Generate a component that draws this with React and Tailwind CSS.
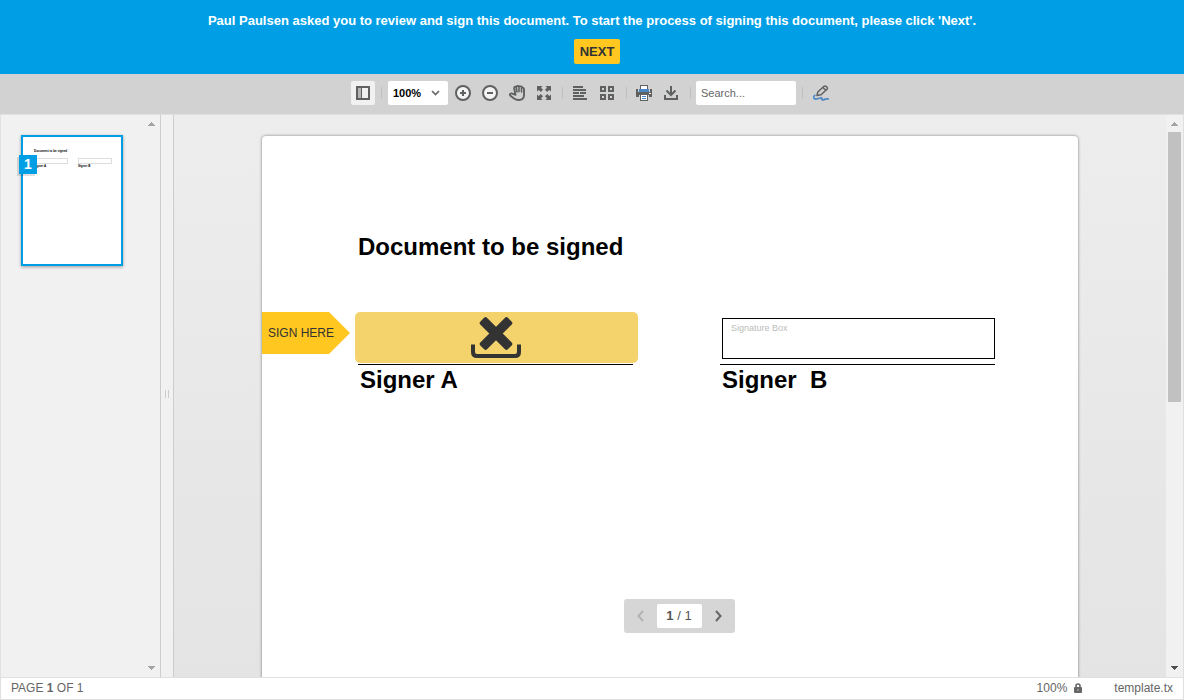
import React, { useState } from 'react';

const ToolButton = ({ label, children }) => (
    <button aria-label={label} className="flex items-center justify-center w-[26px] h-6 mr-px text-[#5f6060]">
        {children}
    </button>
);

const Separator = ({ className }) => (
    <div className={`flex justify-center ${className}`}>
        <div className="w-px h-3 bg-[#c0c0c0]"></div>
    </div>
);

const ScrollArrow = ({ down, className }) => (
    <svg className={`w-[7px] h-1 ${className}`} viewBox="0 0 7 4" fill="currentColor" shapeRendering="crispEdges">
        <path d={down ? 'M0 0h7v1H6v1H5v1H4v1H3V3H2V2H1V1H0z' : 'M0 4h7V3H6V2H5V1H4V0H3v1H2v1H1v1H0z'} />
    </svg>
);

const Banner = () => (
    <header className="flex flex-col items-center h-[74px] shrink-0 pt-[13px] gap-[10px] bg-[#009fe5]">
        <p className="text-[13px] leading-4 font-bold text-white">
            Paul Paulsen asked you to review and sign this document. To start the process of signing this document, please click 'Next'.
        </p>
        <button className="w-[46px] h-[25px] ml-[10px] rounded-[2px] bg-[#ffc720] text-[13px] font-bold text-[#333] hover:bg-[#ffd24d]">
            NEXT
        </button>
    </header>
);

const Toolbar = ({ zoom, setZoom }) => {
    const [search, setSearch] = useState('');

    return (
        <div className="flex items-center justify-center h-10 pb-[2px] shrink-0 bg-[#d2d2d2]">
            <button aria-label="Toggle sidebar" className="flex items-center justify-center w-6 h-6 rounded-[2px] bg-[#f1f1f1] text-[#5f6060]">
                <svg className="w-[14px] h-[14px]" viewBox="0 0 14 14" fill="none">
                    <path d="M1 1h4v12H1z" fill="#b5b5b5" />
                    <path d="M1 1h12v12H1z" stroke="currentColor" strokeWidth="2" />
                    <path d="M5.5 1v12" stroke="currentColor" />
                </svg>
            </button>
            <Separator className="w-[13px]" />
            <div className="relative mr-[2px]">
                <select
                    aria-label="Zoom"
                    className="block w-[60px] h-6 pl-[5px] rounded-[2px] appearance-none bg-white text-[11px] font-bold text-black focus:outline-none"
                    value={zoom} onChange={(e) => setZoom(e.target.value)}
                >
                    <option value="50">50%</option>
                    <option value="100">100%</option>
                    <option value="200">200%</option>
                </select>
                <div className="absolute inset-y-0 right-2 flex items-center pointer-events-none text-[#666]">
                    <svg className="w-[9px] h-[9px]" viewBox="0 0 9 9" fill="none" stroke="currentColor" strokeWidth="1.6">
                        <path d="M1 2l3.5 3.5L8 2" />
                    </svg>
                </div>
            </div>
            <ToolButton label="Zoom in">
                <svg className="w-4 h-4" viewBox="0 0 16 16" fill="none" stroke="currentColor">
                    <circle cx="8" cy="8" r="7" strokeWidth="2" fill="#f4f4f4" />
                    <path d="M8 5v6M5 8h6" strokeWidth="2" />
                </svg>
            </ToolButton>
            <ToolButton label="Zoom out">
                <svg className="w-4 h-4" viewBox="0 0 16 16" fill="none" stroke="currentColor">
                    <circle cx="8" cy="8" r="7" strokeWidth="2" fill="#f4f4f4" />
                    <path d="M5 8h6" strokeWidth="2" />
                </svg>
            </ToolButton>
            <ToolButton label="Pan">
                <svg className="w-4 h-4" viewBox="0 0 16 16" fill="none" stroke="currentColor" strokeLinecap="round" strokeLinejoin="round">
                    <path d="M6.500 9.800L5.200 3.500Q5 2 6.200 1.800L8 1.200q1-.4 2 0l2 .2q1 .2 1.200 1l1 .4q.8.500.8 1.500v6.200q-.3 4.300-5 4.500Q7 15 5 13.500L1.500 10.800Q.5 9.600 1.300 8.800q1-.8 2.200-.2l3 1.200" strokeWidth="1.900" />
                    <path d="M7.300 2.500l.7 4.300M10 2v4.800M12.500 3v4" strokeWidth="1.600" />
                </svg>
            </ToolButton>
            <ToolButton label="Full screen">
                <svg className="w-[14px] h-[14px]" viewBox="0 0 14 14" fill="currentColor">
                    <path d="M0 0h5.500L4 1.800l2 2L3.800 6l-2-2L0 5.500zM14 0v5.500L12.200 4l-2 2L8 3.800l2-2L8.500 0zM14 14H8.500l1.500-1.800-2-2L10.200 8l2 2L14 8.500zM0 14V8.500L1.800 10l2-2L6 10.200l-2 2L5.500 14z" />
                </svg>
            </ToolButton>
            <Separator className="w-[9px]" />
            <ToolButton label="Continuous view">
                <svg className="w-[14px] h-[14px]" viewBox="0 0 14 14" fill="currentColor" shapeRendering="crispEdges">
                    <path d="M0 0h10v2H0zM0 3h13v2H0zM0 6h6v2H0zM7 6h6v2H7zM0 9h11v2H0zM0 12h14v2H0z" />
                </svg>
            </ToolButton>
            <ToolButton label="Grid view">
                <svg className="w-[14px] h-[14px]" viewBox="0 0 14 14" fill="none" stroke="currentColor" strokeWidth="2">
                    <path d="M1 1h4v4H1zM9 1h4v4H9zM1 9h4v4H1zM9 9h4v4H9z" />
                </svg>
            </ToolButton>
            <Separator className="w-[10px]" />
            <ToolButton label="Print">
                <svg className="w-4 h-4" viewBox="0 0 16 16" fill="currentColor" shapeRendering="crispEdges">
                    <path d="M0 4h2v3h12V4h2v8h-3v-2H3v2H0z" />
                    <path d="M4 0h8v5H4z" />
                    <path d="M5 1h6v3H5z" fill="#fff" />
                    <path d="M3 4h10v3H3z" fill="#4a86c5" />
                    <path d="M4 9h8v7H4z" />
                    <path d="M5 10h6v5H5z" fill="#fff" />
                    <path d="M6 11h4v1H6zM6 13h4v1H6z" fill="#4a86c5" />
                    <path d="M13 8h2v1h-2z" fill="#fff" />
                </svg>
            </ToolButton>
            <ToolButton label="Download">
                <svg className="w-[14px] h-4" viewBox="0 0 14 16" fill="none" stroke="currentColor" strokeWidth="2">
                    <path d="M7 1v9M2.500 5.500L7 10l4.500-4.500" />
                    <path d="M1 10v4h12v-4" />
                </svg>
            </ToolButton>
            <Separator className="w-[11px]" />
            <input
                type="text"
                aria-label="Search"
                placeholder="Search..."
                className="w-[100px] h-6 px-[5px] rounded-[2px] bg-white text-[11px] text-[#333] placeholder:text-[#666] focus:outline-none"
                value={search} onChange={(e) => setSearch(e.target.value)}
            />
            <Separator className="w-3" />
            <button aria-label="Sign" className="flex items-center w-[25px] h-6 pl-[5px] text-[#5f6060]">
                <svg className="w-4 h-4" viewBox="0 0 16 16" fill="none">
                    <path d="M4 10.500L4.800 7 11 1.300q1-.8 2 0l1 1q.8 1 0 2L8 9.800z" stroke="currentColor" strokeWidth="1.500" strokeLinejoin="round" />
                    <path d="M10 2.500l3 3" stroke="currentColor" strokeWidth="1.500" />
                    <path d="M2.500 10Q.5 10.800.8 12.700q.4 1.800 3 1.300l4.200-1.200q1.200 0 .8 1-.2 1.200 1.200 1.200 1.200-.2 2.500-1 1.300-.3 3.500 0" stroke="#4a86c5" strokeWidth="1.700" />
                </svg>
            </button>
        </div>
    );
};

const Sidebar = () => (
    <aside className="flex w-40 shrink-0 bg-[#f1f1f1] border-l border-[#e2e2e2]">
        <div className="flex-1 pt-5 pl-5">
            <button aria-label="Page 1" className="relative block w-[102px] h-[131px] border-2 border-[#009fe5] bg-white text-left shadow-[0_1px_3px_rgba(0,0,0,0.35)]">
                <div className="h-full pt-3 pl-[11px] text-[3px] leading-[4px] font-bold text-black">
                    <div>Document to be signed</div>
                    <div className="flex gap-[10px] pt-[5px]">
                        <div className="w-[34px]">
                            <div className="h-[6px] border border-[#ddd]"></div>
                            <div>Signer A</div>
                        </div>
                        <div className="w-[34px]">
                            <div className="h-[6px] border border-[#ddd]"></div>
                            <div>Signer B</div>
                        </div>
                    </div>
                </div>
                <span className="absolute top-[18px] -left-1 w-[18px] h-[19px] bg-[#009fe5] text-center text-sm leading-[19px] font-bold text-white shadow-[-2px_2px_0_rgba(0,0,0,0.12)]">
                    1
                </span>
            </button>
        </div>
        <div className="flex flex-col items-center justify-between w-[17px] py-[7px]">
            <ScrollArrow className="text-[#a3a3a3]" />
            <ScrollArrow down className="text-[#a3a3a3]" />
        </div>
    </aside>
);

const Splitter = () => (
    <div className="flex items-center justify-center w-[14px] shrink-0 gap-[2px] pb-1 border-x border-[#cdcdcd] bg-[#f1f1f1]">
        <div className="w-px h-2 bg-[#ccc]"></div>
        <div className="w-px h-2 bg-[#ccc]"></div>
    </div>
);

const DocumentPage = () => (
    <article className="w-[816px] h-[1056px] pt-24 rounded-[4px] bg-white text-black shadow-[0_0_3px_rgba(0,0,0,0.5)]">
        <h1 className="pl-24 text-2xl leading-[30px] font-bold">Document to be signed</h1>
        <div className="flex pt-[50px]">
            <div className="w-[88px] h-[42px] mr-[5px] pl-[6px] bg-[#ffc720] text-xs leading-[42px] text-[#333] [clip-path:polygon(0_0,67px_0,100%_50%,67px_100%,0_100%)]">
                SIGN HERE
            </div>
            <div className="w-[283px]">
                <button aria-label="Sign as Signer A" className="flex items-center justify-center w-full h-[51px] pr-px rounded-[5px] bg-[#f5d36c] text-[#333]">
                    <svg className="w-[50px] h-[42px]" viewBox="0 0 50 42" fill="currentColor">
                        <rect x="5.500" y="11.800" width="39" height="9.500" rx="2" transform="rotate(45 25 16.500)" />
                        <rect x="5.500" y="11.800" width="39" height="9.500" rx="2" transform="rotate(-45 25 16.500)" />
                        <path d="M2 27.500v7.500q0 4 4 4h38q4 0 4-4v-7.500" fill="none" stroke="currentColor" strokeWidth="4" />
                    </svg>
                </button>
                <div className="h-px mt-px ml-[3px] mr-[5px] bg-black"></div>
                <p className="pl-[5px] text-2xl leading-[30px] font-bold">Signer A</p>
            </div>
            <div className="w-[275px] ml-[82px] pt-[6px]">
                <button className="block w-[273px] h-[41px] ml-[2px] pt-1 pl-2 border border-black text-left text-[9px] leading-[10px] text-[#bbb]">
                    <span className="block h-full">Signature Box</span>
                </button>
                <div className="h-px mt-[5px] bg-black"></div>
                <p className="pl-[2px] text-2xl leading-[30px] font-bold whitespace-pre">Signer  B</p>
            </div>
        </div>
    </article>
);

const Pager = () => (
    <nav className="absolute bottom-11 left-px right-0 mx-auto flex items-center w-[111px] h-[34px] rounded-[3px] bg-[#d6d6d6] text-[#666]">
        <button aria-label="Previous page" className="flex items-center justify-center w-[33px] h-full text-[#b3b3b3]">
            <svg className="w-[7px] h-3" viewBox="0 0 7 12" fill="none" stroke="currentColor" strokeWidth="2">
                <path d="M6 1L1.500 6 6 11" />
            </svg>
        </button>
        <div className="flex-1 h-6 rounded-[2px] bg-white text-center text-[13px] leading-6 text-[#555]">
            <b>1</b> / 1
        </div>
        <button aria-label="Next page" className="flex items-center justify-center w-[33px] h-full">
            <svg className="w-[7px] h-3" viewBox="0 0 7 12" fill="none" stroke="currentColor" strokeWidth="2">
                <path d="M1 1l4.500 5L1 11" />
            </svg>
        </button>
    </nav>
);

const StatusBar = ({ zoom }) => (
    <footer className="flex items-center h-[23px] shrink-0 px-[10px] pb-px border border-[#e0e0e0] bg-white text-xs text-[#666]">
        <span>PAGE <b>1</b> OF 1</span>
        <span className="ml-auto">{zoom}%</span>
        <svg className="w-2 h-[10px] ml-[7px] mr-8" viewBox="0 0 8 10" fill="none">
            <path d="M2 5V2.800Q2 1 4 1t2 1.800V5" stroke="currentColor" strokeWidth="1.600" />
            <rect y="4" width="8" height="6" rx="1" fill="currentColor" />
            <path d="M4 6v2" stroke="#bbb" />
        </svg>
        <span>template.tx</span>
    </footer>
);

const App = () => {
    const [zoom, setZoom] = useState('100');

    return (
        <div className="flex flex-col h-screen font-['Liberation_Sans',Arial,sans-serif]">
            <Banner />
            <Toolbar zoom={zoom} setZoom={setZoom} />
            <main className="flex flex-1 min-h-0 border-t border-[#e0e0e0]">
                <Sidebar />
                <Splitter />
                <section className="relative flex flex-1 min-w-0 border-r border-[#e0e0e0]">
                    <div className="flex justify-center flex-1 min-w-0 pt-[21px] overflow-hidden bg-linear-to-b from-[#ededed] to-[#e4e4e4]">
                        <DocumentPage />
                    </div>
                    {/* Scrollbar */}
                    <div className="flex flex-col items-center w-[17px] py-[7px] bg-[#f1f1f1]">
                        <ScrollArrow className="text-[#a3a3a3]" />
                        <div className="w-[13px] h-[270px] mt-[6px] bg-[#c1c1c1]"></div>
                        <ScrollArrow down className="mt-auto text-[#505050]" />
                    </div>
                    <Pager />
                </section>
            </main>
            <StatusBar zoom={zoom} />
        </div>
    );
};

export default App;
